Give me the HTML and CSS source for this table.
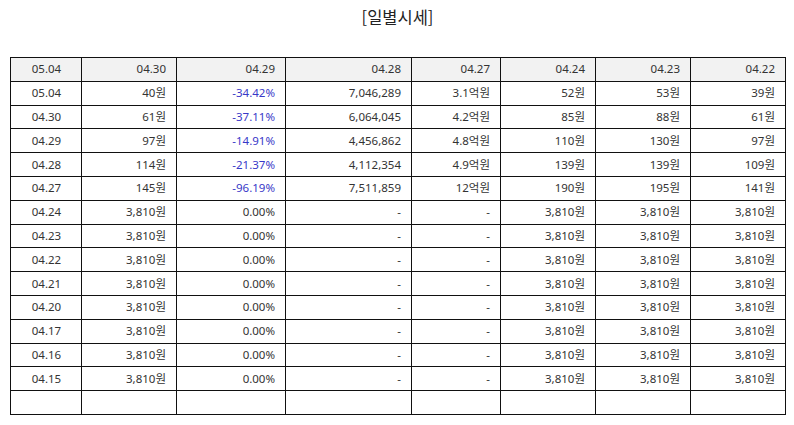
FILE: index.html
```html
<!DOCTYPE html>
<html lang="ko">
<head>
<meta charset="utf-8">
<link rel="stylesheet" href="styles.css">
</head>
<body>
<div class="page">
  <h1 class="title">[일별시세]</h1>
  <table class="grid">
    <colgroup>
      <col class="c1"><col class="c2"><col class="c3"><col class="c4"><col class="c5"><col class="c6"><col class="c7"><col class="c8">
    </colgroup>
    <thead>
      <tr><th class="day">05.04</th><th>04.30</th><th>04.29</th><th>04.28</th><th>04.27</th><th>04.24</th><th>04.23</th><th>04.22</th></tr>
    </thead>
    <tbody>
      <tr><td class="day">05.04</td><td>40원</td><td class="neg">-34.42%</td><td>7,046,289</td><td>3.1억원</td><td>52원</td><td>53원</td><td>39원</td></tr>
      <tr><td class="day">04.30</td><td>61원</td><td class="neg">-37.11%</td><td>6,064,045</td><td>4.2억원</td><td>85원</td><td>88원</td><td>61원</td></tr>
      <tr><td class="day">04.29</td><td>97원</td><td class="neg">-14.91%</td><td>4,456,862</td><td>4.8억원</td><td>110원</td><td>130원</td><td>97원</td></tr>
      <tr><td class="day">04.28</td><td>114원</td><td class="neg">-21.37%</td><td>4,112,354</td><td>4.9억원</td><td>139원</td><td>139원</td><td>109원</td></tr>
      <tr><td class="day">04.27</td><td>145원</td><td class="neg">-96.19%</td><td>7,511,859</td><td>12억원</td><td>190원</td><td>195원</td><td>141원</td></tr>
      <tr><td class="day">04.24</td><td>3,810원</td><td>0.00%</td><td>-</td><td>-</td><td>3,810원</td><td>3,810원</td><td>3,810원</td></tr>
      <tr><td class="day">04.23</td><td>3,810원</td><td>0.00%</td><td>-</td><td>-</td><td>3,810원</td><td>3,810원</td><td>3,810원</td></tr>
      <tr><td class="day">04.22</td><td>3,810원</td><td>0.00%</td><td>-</td><td>-</td><td>3,810원</td><td>3,810원</td><td>3,810원</td></tr>
      <tr><td class="day">04.21</td><td>3,810원</td><td>0.00%</td><td>-</td><td>-</td><td>3,810원</td><td>3,810원</td><td>3,810원</td></tr>
      <tr><td class="day">04.20</td><td>3,810원</td><td>0.00%</td><td>-</td><td>-</td><td>3,810원</td><td>3,810원</td><td>3,810원</td></tr>
      <tr><td class="day">04.17</td><td>3,810원</td><td>0.00%</td><td>-</td><td>-</td><td>3,810원</td><td>3,810원</td><td>3,810원</td></tr>
      <tr><td class="day">04.16</td><td>3,810원</td><td>0.00%</td><td>-</td><td>-</td><td>3,810원</td><td>3,810원</td><td>3,810원</td></tr>
      <tr><td class="day">04.15</td><td>3,810원</td><td>0.00%</td><td>-</td><td>-</td><td>3,810원</td><td>3,810원</td><td>3,810원</td></tr>
      <tr><td class="day"></td><td></td><td></td><td></td><td></td><td></td><td></td><td></td></tr>
    </tbody>
  </table>
</div>
</body>
</html>
```
FILE: styles.css
```css
html, body {
  margin: 0;
  padding: 0;
  background: #fff;
}
.page {
  padding: 6px 9px 0 10px;
  font-family: "Noto Sans", "Noto Sans CJK KR", sans-serif;
  color: #333;
}
.title {
  margin: 0 0 29px 0;
  font-family: "Noto Sans CJK KR", sans-serif;
  font-weight: 400;
  font-size: 16.5px;
  line-height: 22px;
  text-align: center;
  color: #222;
}
.grid {
  width: 775px;
  border-collapse: collapse;
  table-layout: fixed;
  font-size: 11.5px;
}
.c1 { width: 71px; }
.c2 { width: 95px; }
.c3 { width: 109px; }
.c4 { width: 126px; }
.c5 { width: 89px; }
.c6 { width: 95px; }
.c7 { width: 95px; }
.c8 { width: 95px; }
.grid tr { height: 23.8px; }
.grid th, .grid td {
  border: 1px solid #111;
  padding: 0 10px 0 4px;
  text-align: right;
  font-weight: 400;
  white-space: nowrap;
  line-height: 14px;
}
.grid th { background: #f2f2f2; }
.grid .day {
  text-align: center;
  padding: 0 2px 0 3px;
}
.neg { color: #3838c8; }
```
